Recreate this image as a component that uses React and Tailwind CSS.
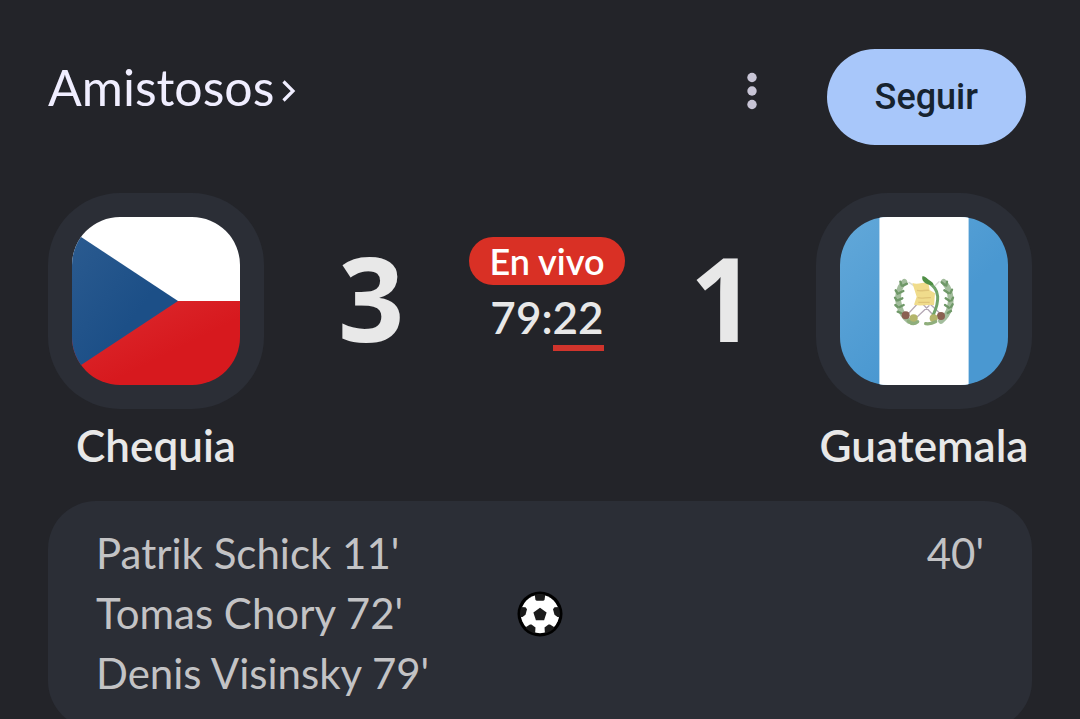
const homeGoals = ["Patrik Schick 11'", "Tomas Chory 72'", "Denis Visinsky 79'"];
const awayGoals = ["40'"];

function ChevronIcon() {
  return (
    <svg viewBox="0 0 14 24" className="mt-2 h-6 w-[14px]" fill="none" stroke="currentColor" strokeWidth="3.200" aria-hidden="true">
      <path d="M1.500 2.500 11 12l-9.500 9.500" />
    </svg>
  );
}

function KebabIcon() {
  return (
    <svg viewBox="0 0 48 48" className="size-12" fill="currentColor" aria-hidden="true">
      <circle cx="24" cy="10.500" r="4.700" />
      <circle cx="24" cy="24" r="4.700" />
      <circle cx="24" cy="37.500" r="4.700" />
    </svg>
  );
}

function CzechFlag() {
  return (
    <svg viewBox="0 0 168 168" className="size-full" aria-hidden="true">
      <defs>
        <linearGradient id="cz-red" x1="0" y1="0" x2="1" y2="1">
          <stop offset="0" stopColor="#dd2c30" />
          <stop offset="0.6" stopColor="#d7191e" />
        </linearGradient>
        <linearGradient id="cz-blue" x1="0" y1="0" x2="1" y2="1">
          <stop offset="0" stopColor="#2b5b90" />
          <stop offset="0.6" stopColor="#1c4f87" />
        </linearGradient>
      </defs>
      <rect width="168" height="84" fill="#fff" />
      <rect y="84" width="168" height="84" fill="url(#cz-red)" />
      <path d="M0 14 106 84 0 154Z" fill="url(#cz-blue)" />
    </svg>
  );
}

function GuatemalaFlag() {
  return (
    <svg viewBox="0 0 168 168" className="size-full" aria-hidden="true">
      <defs>
        <linearGradient id="gt-blue" gradientUnits="userSpaceOnUse" x1="0" y1="0" x2="168" y2="168">
          <stop offset="0" stopColor="#62a8d9" />
          <stop offset="0.6" stopColor="#4a98d1" />
        </linearGradient>
      </defs>
      <rect width="168" height="168" fill="url(#gt-blue)" />
      <rect x="39" width="90" height="168" fill="#b9d8ee" />
      <rect x="40" width="88" height="168" fill="#fff" />

      {/* coat of arms */}
      <svg x="45" y="48" width="80" height="70" viewBox="0 0 240 210" fill="none">
        <g stroke="#a3bd9d" strokeWidth="17" strokeLinecap="round">
          <path d="M58 50C40 68 34 100 44 126c5 18 15 32 28 42" />
          <path d="M176 50c18 18 26 50 18 78-5 18-14 30-26 40" />
        </g>
        <g stroke="#6f9868" strokeWidth="7" strokeLinecap="round">
          <path d="m50 62-4-12M54 62l12-6M38 86l-6-10M43 84l12-6M35 106l-5-8M38 106l14-6M38 126l-7-6M44 126l12-6M48 144l-10-4" />
          <path d="m184 62 2-12M180 60l-10-8M196 84l5-10M190 84l-12-8M200 106l4-8M194 108l-12-8M198 126l5-8M192 128l-12-8M188 144l10-6" />
        </g>
        <g stroke="#b5a9b5" strokeWidth="4" strokeLinecap="round">
          <path d="m68 148 26-28M92 160l40-38M150 156l-36-38M166 146l-30-28" />
          <path d="m72 52 14 10M162 50l-12 12" stroke="#d9dcd8" />
        </g>
        <path d="M82 54c18 6 34-4 48-1l4 22 16 10-3 36c-20-4-38 4-60-2l8-24Z" fill="#f0dc8c" />
        <path d="M96 76c14 4 24-2 36 0M98 98c14 4 26-2 40 0M100 112h34" stroke="#dfc478" strokeWidth="4" />
        <path d="M122 44c14 14 34 22 36 50 2 26-8 44-16 62" stroke="#6fa36a" strokeWidth="9" strokeLinecap="round" />
        <path d="M112 34c8-3 14 6 20 11 6 5 12 6 14 14-16 4-38-6-34-25Z" fill="#4f8f45" />
        <circle cx="62" cy="151" r="12" fill="#8a6052" />
        <circle cx="168" cy="153" r="12" fill="#8a6052" />
        <circle cx="86" cy="160" r="12" fill="#b3b56c" />
        <circle cx="146" cy="160" r="12" fill="#b3b56c" />
        <path d="M70 168q14 14 28 2M122 176q16 2 30-6" stroke="#8fae7c" strokeWidth="10" strokeLinecap="round" />
      </svg>
    </svg>
  );
}

function BallIcon() {
  return (
    <svg viewBox="0 0 46 46" className="size-[46px]" role="img" aria-label="Goles">
      <defs>
        <clipPath id="ball">
          <circle cx="23" cy="23" r="20" />
        </clipPath>
      </defs>
      <circle cx="23" cy="23" r="22.500" fill="#000" />
      <circle cx="23" cy="23" r="19.200" fill="#fff" />
      <g fill="#1b1b1b" clipPath="url(#ball)">
        <path d="m23 16.700 6.600 4.800-2.500 7.800h-8.200l-2.500-7.800Z" />
        <path d="M17.500 2h11l-1 7-1.200.800h-6.600l-1.200-.800Z" />
        <path d="m1 16 7.500.300 1.500 2-1.500 5.500-3 2.200H1Z" />
        <path d="m45 16-7.500.300-1.500 2 1.500 5.500 3 2.200H45Z" />
        <path d="m9 36 4-2.500h1.500l4 3-.500 6.500-8 1Z" />
        <path d="m37 36-4-2.500h-1.500l-4 3 .500 6.500 8 1Z" />
      </g>
    </svg>
  );
}

function Score({ children }) {
  return <span className="pb-2 font-['Open_Sans',sans-serif] text-[116px] leading-none font-bold">{children}</span>;
}

function Team({ name, children }) {
  return (
    <div className="flex w-[216px] flex-col items-center">
      <div className="size-[216px] rounded-[72px] bg-[#2b2e36] p-6">
        <div className="size-full overflow-hidden rounded-[48px]">{children}</div>
      </div>
      <h2 className="mt-3 text-[44px] leading-12 font-semibold whitespace-nowrap">{name}</h2>
    </div>
  );
}

export default function App() {
  return (
    <main className="h-screen overflow-y-auto bg-[#232429] px-12 pt-[49px] font-['Lato','Roboto',sans-serif] text-[#e8e8e8]">
      <header className="flex items-start pr-[6px]">
        <a href="#amistosos" className="mt-2 flex items-center gap-2 text-[50px] leading-[60px] text-[#f0eeff]">
          Amistosos
          <ChevronIcon />
        </a>
        <button type="button" aria-label="Más opciones" className="mt-[18px] ml-auto text-[#c8c5d6]">
          <KebabIcon />
        </button>
        <button
          type="button"
          className="ml-[51px] h-24 rounded-full bg-[#a8c7fa] px-12 font-['Roboto',sans-serif] text-[36px] font-medium text-[#16232f]"
        >
          Seguir
        </button>
      </header>

      <section className="mt-12 flex justify-between">
        <Team name="Chequia">
          <CzechFlag />
        </Team>
        <div className="flex h-[216px] flex-1 items-center justify-between pr-[60px] pl-[74px]">
          <Score>3</Score>
          <div className="flex flex-col items-center pb-[14px]">
            <span className="rounded-full bg-[#d93025] px-5 text-[36px] leading-12 font-semibold text-white">En vivo</span>
            <p className="mt-2 text-[44px] leading-12 font-semibold">
              79:<span className="inline-block border-b-6 border-[#d0342c] pb-1">22</span>
            </p>
          </div>
          <Score>1</Score>
        </div>
        <Team name="Guatemala">
          <GuatemalaFlag />
        </Team>
      </section>

      <section className="mt-8 flex items-center rounded-[48px] bg-[#2b2e36] px-12 pt-6 pb-[26px] text-[42px] leading-[60px] text-[#c3c3c5]">
        <ul className="-mt-[2px] flex-1 self-start">
          {homeGoals.map((goal) => (
            <li key={goal}>{goal}</li>
          ))}
        </ul>
        <BallIcon />
        <ul className="-mt-[2px] flex-1 self-start text-right">
          {awayGoals.map((goal) => (
            <li key={goal}>{goal}</li>
          ))}
        </ul>
      </section>
    </main>
  );
}
